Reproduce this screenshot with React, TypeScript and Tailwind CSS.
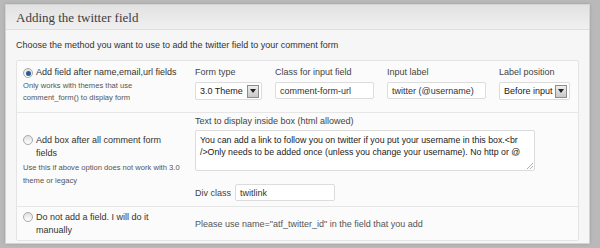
import React from 'react';

const sans = { fontFamily: '"Liberation Sans", Arial, sans-serif' };

const Radio = ({ checked }: { checked?: boolean }) => (
  <span className="mt-[1px] inline-flex h-[10px] w-[10px] shrink-0 items-center justify-center rounded-full border border-[#a8a8a8] bg-gradient-to-b from-[#e0e0e0] to-white">
    {checked && <span className="h-[5px] w-[5px] rounded-full bg-[#2a5a9a]" />}
  </span>
);

const Arrow = () => (
  <span className="flex h-[13px] w-[12px] items-center justify-center border border-[#8c8c8c] bg-gradient-to-b from-[#eee] to-[#c8c8c8]">
    <svg width="6" height="4" viewBox="0 0 6 4">
      <path d="M0 0h6L3 4z" fill="#222" />
    </svg>
  </span>
);

const Select = ({ value, width }: { value: string; width: string }) => (
  <div className={`flex h-[18px] items-center justify-between rounded-[2px] border border-[#dcdcdc] bg-white pl-[4px] pr-[2px] text-[9px] text-[#222] ${width}`}>
    <span>{value}</span>
    <Arrow />
  </div>
);

const Input = ({ value, width }: { value: string; width: string }) => (
  <div className={`flex h-[17px] items-center rounded-[2px] border border-[#dcdcdc] bg-white pl-[4px] text-[9px] text-[#333] ${width}`}>
    {value}
  </div>
);

const Field = ({ label, children }: { label: string; children: React.ReactNode }) => (
  <div className="flex flex-col gap-[4px]">
    <span className="text-[9px] leading-[11px] text-[#444]">{label}</span>
    {children}
  </div>
);

export default function App() {
  return (
    <div className="h-[248px] w-[600px] bg-[#b9b9b9] pl-[5px] pr-[10px] pt-[4px] text-[9px] leading-[12px]" style={sans}>
      <div className="h-[240px] w-[585px] border border-[#d4d4d4] bg-[#f6f6f6] shadow-[0_0_3px_rgba(0,0,0,0.15)]">
        <div className="flex h-[25px] items-center border-b border-[#dedede] bg-gradient-to-b from-[#e2e2e2] to-[#f0f0f0] pl-[10px]">
          <span className="text-[13px] leading-[15px] text-[#404040]" style={{ fontFamily: '"Liberation Serif", "Times New Roman", serif' }}>
            Adding the twitter field
          </span>
        </div>
        <div className="px-[10px] pt-[9px]">
          <p className="leading-[12px] text-[#333]">
            Choose the method you want to use to add the twitter field to your comment form
          </p>
          <div className="mt-[9px] w-[563px] rounded-[2px] border border-[#e4e4e4] bg-[#fbfbfb] text-[#333]">
            <div className="flex h-[52px] border-b border-[#e6e6e6] pt-[6px]">
              <div className="w-[178px] pl-[6px]">
                <div className="flex items-start gap-[3px] leading-[11px]">
                  <Radio checked />
                  <span className="whitespace-nowrap">Add field after name,email,url fields</span>
                </div>
                <div className="mt-[2px] text-[7.6px] leading-[12px] text-[#555]">
                  Only works with themes that use
                  <br />
                  comment_form() to display form
                </div>
              </div>
              <div className="flex gap-[13px]">
                <Field label="Form type">
                  <Select value="3.0 Theme" width="w-[67px]" />
                </Field>
                <Field label="Class for input field">
                  <Input value="comment-form-url" width="w-[99px]" />
                </Field>
                <Field label="Input label">
                  <Input value="twitter (@username)" width="w-[99px]" />
                </Field>
                <Field label="Label position">
                  <Select value="Before input" width="w-[71px]" />
                </Field>
              </div>
            </div>
            <div className="flex h-[94px] border-b border-[#e6e6e6]">
              <div className="w-[178px] pl-[6px] pt-[21px]">
                <div className="flex items-start gap-[3px] leading-[13px]">
                  <Radio />
                  <span>
                    Add box after all comment form
                    <br />
                    fields
                  </span>
                </div>
                <div className="mt-[1px] text-[7.6px] leading-[13px] text-[#555]">
                  Use this if above option does not work with 3.0
                  <br />
                  theme or legacy
                </div>
              </div>
              <div className="pt-[3px]">
                <div className="leading-[11px] text-[#444]">Text to display inside box (html allowed)</div>
                <div className="relative mt-[3px] h-[41px] w-[340px] rounded-[2px] border border-[#dcdcdc] bg-white px-[4px] pt-[3px] text-[8.8px] leading-[12px] text-[#222]">
                  You can add a link to follow you on twitter if you put your username in this box.&lt;br
                  <br />
                  /&gt;Only needs to be added once (unless you change your username). No http or @
                  <svg className="absolute bottom-[1px] right-[1px]" width="6" height="6" viewBox="0 0 6 6">
                    <path d="M6 0L0 6M6 3L3 6" stroke="#999" strokeWidth="0.8" />
                  </svg>
                </div>
                <div className="mt-[13px] flex items-center gap-[4px]">
                  <span className="text-[#444]">Div class</span>
                  <Input value="twitlink" width="w-[100px]" />
                </div>
              </div>
            </div>
            <div className="flex h-[33px] items-center">
              <div className="w-[178px] pl-[6px]">
                <div className="flex items-start gap-[3px] leading-[13px]">
                  <Radio />
                  <span>
                    Do not add a field. I will do it
                    <br />
                    manually
                  </span>
                </div>
              </div>
              <span className="text-[#555]">
                Please use name="atf_twitter_id" in the field that you add
              </span>
            </div>
          </div>
        </div>
      </div>
    </div>
  );
}
